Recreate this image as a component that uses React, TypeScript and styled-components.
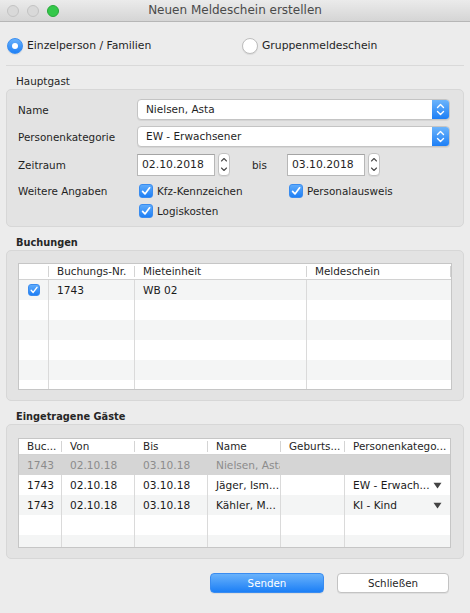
import React from 'react'
import styled, { createGlobalStyle } from 'styled-components'

const GlobalStyle = createGlobalStyle`
  html, body {
    margin: 0;
    padding: 0;
    background: #ececec;
  }
  body {
    font-family: 'DejaVu Sans', 'Noto Sans', sans-serif;
    color: #1f1f1f;
  }
  * {
    box-sizing: border-box;
  }
`

const Window = styled.div`
  width: 470px;
  height: 613px;
  background: #ececec;
  display: flex;
  flex-direction: column;
  overflow: hidden;
`

// title bar
const TitleBar = styled.div`
  height: 22px;
  display: grid;
  grid-template-columns: 1fr auto 1fr;
  align-items: center;
  background: linear-gradient(#ebebeb, #d5d5d5);
  border-bottom: 1px solid #b6b6b6;
`

const Lights = styled.div`
  display: flex;
  gap: 8px;
  padding-left: 7px;
`

const Light = styled.span<{ $fill: string; $edge: string }>`
  width: 12px;
  height: 12px;
  border-radius: 50%;
  background: ${({ $fill }) => $fill};
  border: 1px solid ${({ $edge }) => $edge};
`

const Title = styled.div`
  font-size: 12px;
  line-height: 21px;
  color: #4a4a4a;
`

// radio row
const RadioRow = styled.div`
  height: 43px;
  padding: 4px 0 0 7px;
  display: grid;
  grid-template-columns: 235px 1fr;
  align-items: center;
`

const RadioItem = styled.label`
  display: flex;
  align-items: center;
  gap: 4px;
  font-size: 10.8px;
  line-height: 16px;
`

const RadioDot = styled.span<{ $on?: boolean }>`
  width: 16px;
  height: 16px;
  border-radius: 50%;
  display: flex;
  align-items: center;
  justify-content: center;
  background: ${({ $on }) => ($on ? 'linear-gradient(#66b0fb, #1f80f6)' : '#fff')};
  border: 1px solid ${({ $on }) => ($on ? '#3b8ff2' : '#bdbdbd')};
  box-shadow: 0 1px 1px rgba(0, 0, 0, 0.08);

  &::after {
    content: '';
    display: ${({ $on }) => ($on ? 'block' : 'none')};
    width: 6px;
    height: 6px;
    border-radius: 50%;
    background: #fff;
  }
`

const Separator = styled.div`
  margin: 0 6px;
  height: 1px;
  background: #d9d9d9;
`

// sections
const Section = styled.section`
  padding: 0 6px;
`

const SectionTitle = styled.div<{ $bold?: boolean }>`
  height: 23px;
  padding: 8px 0 0 10px;
  font-size: ${({ $bold }) => ($bold ? '9.8px' : '10.4px')};
  font-weight: ${({ $bold }) => ($bold ? 'bold' : 'normal')};
  line-height: 15px;
  color: #262626;
`

const GroupBox = styled.div<{ $pad: string }>`
  background: #e3e3e3;
  border: 1px solid #d7d7d7;
  border-radius: 5px;
  padding: ${({ $pad }) => $pad};
`

// Hauptgast form
const FormGrid = styled.div`
  display: grid;
  grid-template-columns: 119px 1fr;
  row-gap: 6px;
  align-items: center;
`

const Label = styled.div<{ $top?: boolean }>`
  font-size: 10.4px;
  line-height: 18px;
  align-self: ${({ $top }) => ($top ? 'start' : 'center')};
`

const Popup = styled.div`
  height: 21px;
  display: flex;
  background: #fff;
  border: 1px solid #c4c4c4;
  border-radius: 4px;
  box-shadow: 0 1px 0 rgba(0, 0, 0, 0.06);
  overflow: hidden;
`

const PopupText = styled.span`
  flex: 1;
  padding-left: 8px;
  font-size: 10.5px;
  line-height: 19px;
`

const PopupArrow = styled.span`
  width: 17px;
  display: flex;
  align-items: center;
  justify-content: center;
  background: linear-gradient(#6cb4fb, #1d7ff6);
`

const DateRow = styled.div`
  display: flex;
  align-items: center;
`

const DateField = styled.div`
  width: 78px;
  height: 22px;
  padding-left: 4px;
  background: #fff;
  border: 1px solid #b7b7b7;
  border-top-color: #a4a4a4;
  font-size: 10.8px;
  line-height: 20px;
`

const Stepper = styled.span`
  width: 12px;
  height: 23px;
  margin-left: 3px;
  display: flex;
  background: #fff;
  border: 1px solid #c2c2c2;
  border-radius: 4px;
  box-shadow: 0 1px 0 rgba(0, 0, 0, 0.05);
`

const Bis = styled.span`
  font-size: 10.4px;
  margin: 0 20px 0 22px;
`

const CheckGrid = styled.div`
  display: grid;
  grid-template-columns: 150px auto;
  grid-auto-rows: 18px;
  row-gap: 2px;
`

const CheckItem = styled.label`
  display: flex;
  align-items: center;
  gap: 4px;
  padding-left: 2px;
  font-size: 10.4px;
`

const CheckBox = styled.span<{ $size: number }>`
  width: ${({ $size }) => $size}px;
  height: ${({ $size }) => $size}px;
  flex: none;
  display: flex;
  align-items: center;
  justify-content: center;
  border-radius: 3px;
  background: linear-gradient(#5eabfb, #1f7ff5);
  border: 1px solid #3a8cef;
`

// tables
const Table = styled.div<{ $height: number }>`
  height: ${({ $height }) => $height}px;
  background: #fff;
  border: 1px solid #c6c6c6;
  overflow: hidden;
`

const HeaderRow = styled.div<{ $cols: string }>`
  height: 16px;
  display: grid;
  grid-template-columns: ${({ $cols }) => $cols};
  border-bottom: 1px solid #d2d2d2;
`

const HeadCell = styled.div<{ $last?: boolean }>`
  position: relative;
  padding-left: 8px;
  font-size: 10.4px;
  line-height: 15px;
  color: #262626;
  white-space: nowrap;
  overflow: hidden;

  &::after {
    content: '';
    display: ${({ $last }) => ($last ? 'none' : 'block')};
    position: absolute;
    right: 0;
    top: 2px;
    bottom: 2px;
    width: 1px;
    background: #d4d4d4;
  }
`

const Row = styled.div<{ $cols: string; $stripe?: boolean; $muted?: boolean }>`
  height: 20px;
  display: grid;
  grid-template-columns: ${({ $cols }) => $cols};
  background: ${({ $stripe, $muted }) => ($muted ? '#d5d5d5' : $stripe ? '#f4f5f5' : '#fff')};
  color: ${({ $muted }) => ($muted ? '#8c8c8c' : '#1a1a1a')};
`

const Cell = styled.div<{ $last?: boolean; $muted?: boolean }>`
  padding: 0 0 0 8px;
  font-size: 10.6px;
  line-height: 20px;
  white-space: nowrap;
  overflow: hidden;
  border-right: 1px solid ${({ $last, $muted }) => ($last || $muted ? 'transparent' : '#dadada')};
`

const CheckCell = styled(Cell)`
  display: flex;
  align-items: center;
  justify-content: center;
  padding: 0;
`

const SelectCell = styled(Cell)`
  display: flex;
  align-items: center;
  justify-content: space-between;
  padding-right: 7px;
`

// footer
const Footer = styled.div`
  margin-top: 14px;
  padding-right: 21px;
  display: flex;
  justify-content: flex-end;
  gap: 13px;
`

const Button = styled.button<{ $primary?: boolean }>`
  width: ${({ $primary }) => ($primary ? '114px' : '112px')};
  height: 20px;
  padding: 0;
  font-family: inherit;
  font-size: 10.3px;
  border-radius: 4px;
  color: ${({ $primary }) => ($primary ? '#fff' : '#1f1f1f')};
  background: ${({ $primary }) => ($primary ? 'linear-gradient(#69b2fb, #1c7ff6)' : '#fff')};
  border: 1px solid ${({ $primary }) => ($primary ? '#3a8cf0' : '#c3c3c3')};
  box-shadow: 0 1px 0 rgba(0, 0, 0, 0.06);
`

function Check({ size = 14 }: { size?: number }) {
  const s = size - 2
  return (
    <CheckBox $size={size}>
      <svg width={s} height={s} viewBox="0 0 12 12">
        <path d="M2.6 6.4 L5 8.9 L9.6 2.8" fill="none" stroke="#fff" strokeWidth="1.7" strokeLinecap="round" strokeLinejoin="round" />
      </svg>
    </CheckBox>
  )
}

function PopupButton({ children }: { children: React.ReactNode }) {
  return (
    <Popup>
      <PopupText>{children}</PopupText>
      <PopupArrow>
        <svg width="9" height="13" viewBox="0 0 9 13">
          <path d="M1.5 4.5 L4.5 1.5 L7.5 4.5 M1.5 8.5 L4.5 11.5 L7.5 8.5" fill="none" stroke="#fff" strokeWidth="1.4" strokeLinecap="round" strokeLinejoin="round" />
        </svg>
      </PopupArrow>
    </Popup>
  )
}

function StepperButton() {
  return (
    <Stepper>
      <svg width="10" height="21" viewBox="0 0 10 21">
        <path d="M2.5 7 L5 4.5 L7.5 7 M2.5 14 L5 16.5 L7.5 14" fill="none" stroke="#4a4a4a" strokeWidth="1.1" strokeLinecap="round" strokeLinejoin="round" />
      </svg>
    </Stepper>
  )
}

function Triangle() {
  return (
    <svg width="9" height="7" viewBox="0 0 9 7">
      <path d="M0.5 0.8 L8.5 0.8 L4.5 6.5 Z" fill="#444" />
    </svg>
  )
}

const buchungenCols = '30px 86px 172px 1fr'
const gaesteCols = '43px 73px 73px 73px 64px 1fr'

const buchungen = [{ nr: '1743', einheit: 'WB 02', schein: '' }]

// names and categories are shown already shortened, as the columns do in the app
const gaeste = [
  { buc: '1743', von: '02.10.18', bis: '03.10.18', name: 'Nielsen, Asta', geb: '', kat: '', muted: true },
  { buc: '1743', von: '02.10.18', bis: '03.10.18', name: 'Jäger, Ism...', geb: '', kat: 'EW - Erwach...' },
  { buc: '1743', von: '02.10.18', bis: '03.10.18', name: 'Kähler, M...', geb: '', kat: 'KI - Kind' },
]

export default function App() {
  const buchungRows = Array.from({ length: 6 }, (_, i) => buchungen[i])
  const gastRows = Array.from({ length: 5 }, (_, i) => gaeste[i])

  return (
    <>
      <GlobalStyle />
      <Window>
        <TitleBar>
          <Lights>
            <Light $fill="#d9d9d9" $edge="#c3c3c3" />
            <Light $fill="#d9d9d9" $edge="#c3c3c3" />
            <Light $fill="#34c84a" $edge="#28a83a" />
          </Lights>
          <Title>Neuen Meldeschein erstellen</Title>
          <div />
        </TitleBar>

        <RadioRow>
          <RadioItem>
            <RadioDot $on />
            Einzelperson / Familien
          </RadioItem>
          <RadioItem>
            <RadioDot />
            Gruppenmeldeschein
          </RadioItem>
        </RadioRow>
        <Separator />

        <Section>
          <SectionTitle>Hauptgast</SectionTitle>
          <GroupBox $pad="9px 13px 6px 11px">
            <FormGrid>
              <Label>Name</Label>
              <PopupButton>Nielsen, Asta</PopupButton>

              <Label>Personenkategorie</Label>
              <PopupButton>EW - Erwachsener</PopupButton>

              <Label>Zeitraum</Label>
              <DateRow>
                <DateField>02.10.2018</DateField>
                <StepperButton />
                <Bis>bis</Bis>
                <DateField>03.10.2018</DateField>
                <StepperButton />
              </DateRow>

              <Label $top>Weitere Angaben</Label>
              <CheckGrid>
                <CheckItem>
                  <Check />
                  Kfz-Kennzeichen
                </CheckItem>
                <CheckItem>
                  <Check />
                  Personalausweis
                </CheckItem>
                <CheckItem>
                  <Check />
                  Logiskosten
                </CheckItem>
              </CheckGrid>
            </FormGrid>
          </GroupBox>
        </Section>

        <Section>
          <SectionTitle $bold>Buchungen</SectionTitle>
          <GroupBox $pad="12px 11px 10px 11px">
            <Table $height={127}>
              <HeaderRow $cols={buchungenCols}>
                <HeadCell />
                <HeadCell>Buchungs-Nr.</HeadCell>
                <HeadCell>Mieteinheit</HeadCell>
                <HeadCell>Meldeschein</HeadCell>
              </HeaderRow>
              {buchungRows.map((b, i) => (
                <Row key={i} $cols={buchungenCols} $stripe={i % 2 === 0}>
                  <CheckCell>{b && <Check size={12} />}</CheckCell>
                  <Cell>{b?.nr}</Cell>
                  <Cell>{b?.einheit}</Cell>
                  <Cell $last>{b?.schein}</Cell>
                </Row>
              ))}
            </Table>
          </GroupBox>
        </Section>

        <Section>
          <SectionTitle $bold>Eingetragene Gäste</SectionTitle>
          <GroupBox $pad="13px 12px 10px 11px">
            <Table $height={110}>
              <HeaderRow $cols={gaesteCols}>
                <HeadCell>Buc...</HeadCell>
                <HeadCell>Von</HeadCell>
                <HeadCell>Bis</HeadCell>
                <HeadCell>Name</HeadCell>
                <HeadCell>Geburts...</HeadCell>
                <HeadCell $last>Personenkatego...</HeadCell>
              </HeaderRow>
              {gastRows.map((g, i) => (
                <Row key={i} $cols={gaesteCols} $stripe={i % 2 === 0} $muted={g?.muted}>
                  <Cell $muted={g?.muted}>{g?.buc}</Cell>
                  <Cell $muted={g?.muted}>{g?.von}</Cell>
                  <Cell $muted={g?.muted}>{g?.bis}</Cell>
                  <Cell $muted={g?.muted}>{g?.name}</Cell>
                  <Cell $muted={g?.muted}>{g?.geb}</Cell>
                  <SelectCell $last>
                    {g?.kat && (
                      <>
                        <span>{g.kat}</span>
                        <Triangle />
                      </>
                    )}
                  </SelectCell>
                </Row>
              ))}
            </Table>
          </GroupBox>
        </Section>

        <Footer>
          <Button $primary>Senden</Button>
          <Button>Schließen</Button>
        </Footer>
      </Window>
    </>
  )
}
